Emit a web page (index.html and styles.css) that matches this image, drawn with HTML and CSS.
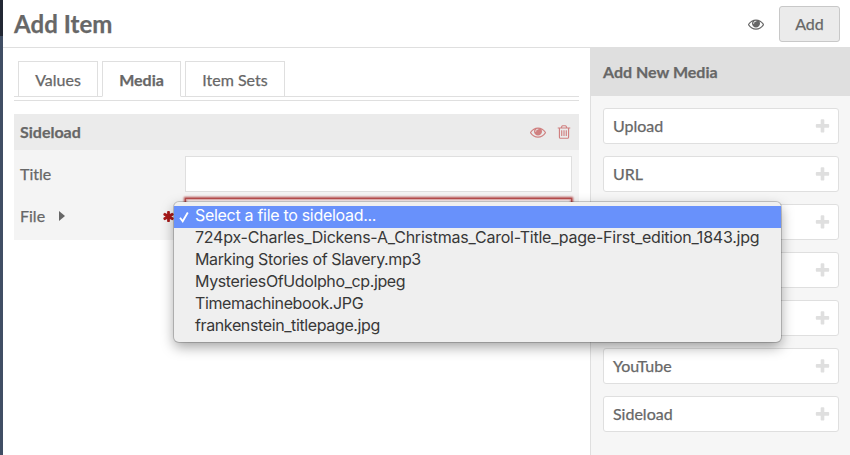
FILE: index.html
```
<!DOCTYPE html>
<html lang="en">
<head>
<meta charset="utf-8">
<title>Add Item</title>
<link rel="stylesheet" href="styles.css">
</head>
<body>
<svg class="defs" aria-hidden="true">
<symbol id="eye" viewBox="0 0 1792 1792"><path d="M1664 960q-152-236-381-353 61 104 61 225 0 185-131.500 316.500t-316.500 131.500-316.500-131.500-131.500-316.500q0-121 61-225-229 117-381 353 133 205 333.500 326.500t434.500 121.500 434.500-121.500 333.500-326.500zm-720-384q0-20-14-34t-34-14q-125 0-214.500 89.500t-89.500 214.500q0 20 14 34t34 14 34-14 14-34q0-86 61-147t147-61q20 0 34-14t14-34zm848 384q0 34-20 69-140 230-376.500 368.500t-499.500 138.500-499.500-139-376.500-368q-20-35-20-69t20-69q140-229 376.500-368t499.500-139 499.500 139 376.500 368q20 35 20 69z"/></symbol>
<symbol id="trash" viewBox="0 0 1792 1792"><path d="M704 736v576q0 14-9 23t-23 9h-64q-14 0-23-9t-9-23v-576q0-14 9-23t23-9h64q14 0 23 9t9 23zm256 0v576q0 14-9 23t-23 9h-64q-14 0-23-9t-9-23v-576q0-14 9-23t23-9h64q14 0 23 9t9 23zm256 0v576q0 14-9 23t-23 9h-64q-14 0-23-9t-9-23v-576q0-14 9-23t23-9h64q14 0 23 9t9 23zm128 724v-948h-896v948q0 22 7 40.500t14.500 27 10.500 8.500h832q3 0 10.500-8.500t14.500-27 7-40.500zm-672-1076h448l-48-117q-7-9-17-11h-317q-10 2-17 11zm928 32v64q0 14-9 23t-23 9h-96v948q0 83-47 143.500t-113 60.500h-832q-66 0-113-58.500t-47-141.500v-952h-96q-14 0-23-9t-9-23v-64q0-14 9-23t23-9h309l70-167q15-37 54-63t79-26h320q40 0 79 26t54 63l70 167h309q14 0 23 9t9 23z"/></symbol>
<symbol id="plus" viewBox="0 0 1792 1792"><path d="M1600 736v192q0 40-28 68t-68 28h-416v416q0 40-28 68t-68 28h-192q-40 0-68-28t-28-68v-416h-416q-40 0-68-28t-28-68v-192q0-40 28-68t68-28h416v-416q0-40 28-68t68-28h192q40 0 68 28t28 68v416h416q40 0 68 28t28 68z"/></symbol>
<symbol id="asterisk" viewBox="0 0 1792 1792"><path d="M1546 1050q46 26 59.500 77.500t-12.500 97.500l-64 110q-26 46-77.500 59.500t-97.500-12.500l-266-153v307q0 52-38 90t-90 38h-128q-52 0-90-38t-38-90v-307l-266 153q-46 26-97.500 12.500t-77.500-59.500l-64-110q-26-46-12.500-97.500t59.500-77.500l266-154-266-154q-46-26-59.500-77.500t12.500-97.500l64-110q26-46 77.500-59.500t97.500 12.500l266 153v-307q0-52 38-90t90-38h128q52 0 90 38t38 90v307l266-153q46-26 97.500-12.500t77.500 59.500l64 110q26 46 12.500 97.500t-59.500 77.500l-266 154z"/></symbol>
</svg>
<div class="app">
  <div class="rail"></div>
  <div class="page">
    <header class="topbar">
      <h1>Add Item</h1>
      <svg class="icon"><use href="#eye"/></svg>
      <button class="add">Add</button>
    </header>
    <div class="columns">
      <main class="content">
        <nav class="tabs">
          <a class="tab values">Values</a>
          <a class="tab media active">Media</a>
          <a class="tab sets">Item Sets</a>
        </nav>
        <section class="block">
          <div class="block-head">
            <h2>Sideload</h2>
            <svg class="icon"><use href="#eye"/></svg>
            <svg class="icon trash"><use href="#trash"/></svg>
          </div>
          <div class="field">
            <span class="label">Title</span>
            <div class="input"></div>
          </div>
          <div class="field">
            <span class="label">File <i class="caret"></i><svg class="required"><use href="#asterisk"/></svg></span>
            <div class="input focused"></div>
            <ul class="menu">
              <li class="selected"><svg class="check" viewBox="0 0 10 12"><path d="M1 6.800 3.700 10.300 8.800 1.500"/></svg><span>Select a file to sideload...</span></li>
              <li class="long"><span>724px-Charles_Dickens-A_Christmas_Carol-Title_page-First_edition_1843.jpg</span></li>
              <li><span>Marking Stories of Slavery.mp3</span></li>
              <li><span>MysteriesOfUdolpho_cp.jpeg</span></li>
              <li><span>Timemachinebook.JPG</span></li>
              <li><span>frankenstein_titlepage.jpg</span></li>
            </ul>
          </div>
        </section>
      </main>
      <aside class="sidebar">
        <h2>Add New Media</h2>
        <div class="types">
          <div class="type">Upload<svg><use href="#plus"/></svg></div>
          <div class="type">URL<svg><use href="#plus"/></svg></div>
          <div class="type"><svg><use href="#plus"/></svg></div>
          <div class="type"><svg><use href="#plus"/></svg></div>
          <div class="type"><svg><use href="#plus"/></svg></div>
          <div class="type">YouTube<svg><use href="#plus"/></svg></div>
          <div class="type">Sideload<svg><use href="#plus"/></svg></div>
        </div>
      </aside>
    </div>
  </div>
</div>
</body>
</html>
```
FILE: styles.css
```
* { box-sizing: border-box; }
body {
  margin: 0;
  overflow: hidden;
  background: #fff;
  color: #676767;
  font: 16px/24px Lato, sans-serif;
  -webkit-text-stroke: 0.25px;
}
h1, h2, ul { margin: 0; padding: 0; }
svg { fill: currentColor; flex: none; }
.defs { display: none; }
.app { display: flex; height: 455px; }
.rail { width: 3px; background: linear-gradient(#222834 36px, #404e64 36px); }
.page { flex: 1; display: flex; flex-direction: column; }

.topbar {
  display: flex;
  align-items: center;
  height: 48px;
  padding: 0 10px 0 11px;
  border-bottom: 1px solid #dfdfdf;
}
.topbar h1 { flex: 1; font-size: 24px; line-height: 36px; letter-spacing: .05px; }
.icon { width: 16px; height: 16px; }
.add {
  width: 61px;
  height: 36px;
  margin-left: 15px;
  border: 1px solid #c8c8c8;
  border-radius: 3px;
  background: #ebebeb;
  color: inherit;
  font: inherit;
  -webkit-text-stroke: inherit;
}

.columns { flex: 1; display: flex; }
.content { width: 587px; padding: 13px 11px 0; }
.tabs {
  display: flex;
  gap: 4px;
  height: 40px;
  padding-left: 4px;
  border-bottom: 1px solid #dfdfdf;
  background: linear-gradient(#dfdfdf, #dfdfdf) 0 35px / 100% 1px no-repeat;
}
.tab {
  height: 36px;
  padding-top: 6px;
  border: 1px solid #dfdfdf;
  text-align: center;
}
.values { width: 80px; }
.media { width: 79px; }
.sets { width: 100px; }
.active { border-bottom-color: #fff; font-weight: bold; }

.block { margin-top: 13px; height: 126px; background: #f4f4f4; }
.block-head {
  display: flex;
  align-items: center;
  height: 36px;
  padding: 0 7px 0 6px;
  background: #ebebeb;
}
.block-head h2 { flex: 1; font-size: 16px; }
.block-head .icon { color: #d08080; }
.block-head .trash { margin-left: 10px; }
.field {
  position: relative;
  display: flex;
  align-items: center;
  height: 36px;
  margin: 6px 7px 6px 6px;
}
.label { display: flex; align-items: center; width: 165px; padding-right: 10px; }
.caret {
  margin-left: 14px;
  border: solid transparent;
  border-width: 5.5px 0 5.5px 6.5px;
  border-left-color: #676767;
}
.required { width: 13px; height: 13px; margin-left: auto; color: #a91919; }
.input { flex: 1; height: 36px; border: 1px solid #dfdfdf; background: #fff; }
.focused { border-color: #b84d4d; box-shadow: 0 0 2px 1px #b84d4d, inset 0 0 2px 1px #d99a9a; }

.menu {
  position: absolute;
  z-index: 1;
  top: 4px;
  left: 154px;
  width: 607px;
  height: 140px;
  padding: 4px 0;
  border-radius: 5px;
  background: #efefef;
  box-shadow: 0 0 0 1px rgba(0,0,0,.18), 0 5px 13px rgba(0,0,0,.36);
  color: #383838;
  font: 16px/22px Inter, sans-serif;
  letter-spacing: -.38px;
  list-style: none;
  -webkit-text-stroke: 0;
}
.menu li { height: 22px; padding-left: 21px; line-height: 19px; white-space: nowrap; }
.menu .selected { position: relative; background: #6891fb; color: #fff; letter-spacing: -.3px; }
.menu .long { letter-spacing: -.23px; }
.check {
  position: absolute;
  left: 5px;
  top: 5px;
  width: 10px;
  height: 12px;
  fill: none;
  stroke: #fff;
  stroke-width: 1.8;
}

.sidebar { flex: 1; margin-top: -1px; border-left: 1px solid #dfdfdf; background: #f6f6f6; }
.sidebar h2 {
  height: 49px;
  margin-left: -1px;
  padding: 13px;
  background: #dfdfdf;
  font-size: 16px;
}
.types { display: grid; gap: 12px; padding: 12px 11px 0 12px; }
.type {
  display: flex;
  align-items: center;
  height: 36px;
  padding: 0 7px 0 9px;
  border: 1px solid #dfdfdf;
  border-radius: 3px;
  background: #fff;
}
.type svg { width: 17px; height: 17px; margin-left: auto; color: #dfdfdf; }
```
